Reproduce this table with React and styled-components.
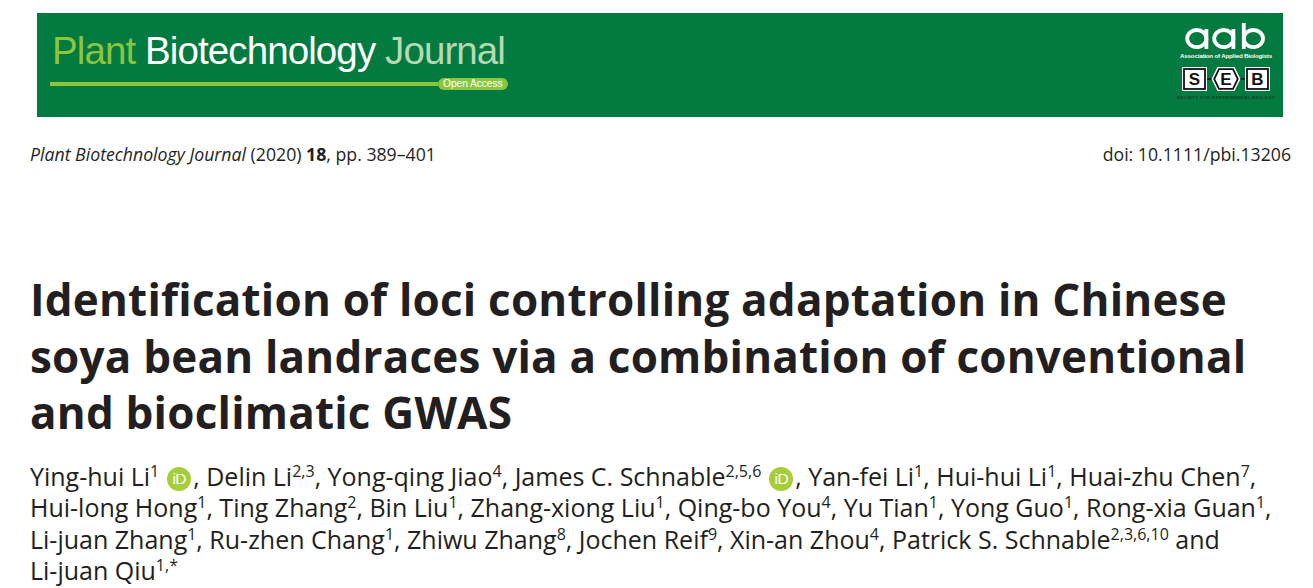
import React from "react";
import styled, { createGlobalStyle } from "styled-components";

const Global = createGlobalStyle`
  html, body { margin: 0; padding: 0; background: #fff; }
  body { width: 1313px; height: 588px; overflow: hidden; }
`;

const Page = styled.div`
  width: 1313px;
  padding-top: 13px;
  font-family: "Open Sans", "Noto Sans", sans-serif;
  color: #231f20;
`;

const Banner = styled.header`
  margin-left: 37px;
  width: 1246px;
  height: 104px;
  background: #037a40;
  display: flex;
  justify-content: space-between;
  box-sizing: border-box;
  padding: 0 12px 0 13px;
`;

const BrandBlock = styled.div`
  display: flex;
  flex-direction: column;
  padding-top: 16px;
`;

const JournalName = styled.div`
  font-family: "Liberation Sans", Arial, sans-serif;
  font-size: 38.5px;
  letter-spacing: -0.9px;
  line-height: 44px;
  padding-left: 2px;
  color: #fff;
`;

const Word = styled.span`
  color: ${(p) => p.$c};
`;

const RuleRow = styled.div`
  display: flex;
  align-items: center;
  margin-top: 5px;
`;

const Rule = styled.div`
  width: 388px;
  height: 4px;
  background: #8cc63f;
`;

const Pill = styled.span`
  background: #8cc63f;
  color: #fff;
  font-family: "Liberation Sans", Arial, sans-serif;
  font-size: 10.3px;
  line-height: 12px;
  height: 12px;
  padding: 0 5px;
  border-radius: 6px;
  letter-spacing: -0.1px;
`;

const Societies = styled.div`
  display: flex;
  flex-direction: column;
  align-items: center;
  padding-top: 10px;
  width: 90px;
`;

const Tiny = styled.div`
  color: ${(p) => p.$c || "#fff"};
  font-family: "Liberation Sans", Arial, sans-serif;
  font-weight: ${(p) => p.$w || 400};
  font-size: ${(p) => p.$s || 5}px;
  line-height: 7px;
  white-space: nowrap;
  letter-spacing: ${(p) => p.$ls || 0}px;
  margin: ${(p) => p.$m || "0"};
`;

const MetaRow = styled.div`
  display: flex;
  justify-content: space-between;
  padding: 26px 22px 0 30px;
  font-size: 17.7px;
  line-height: 22px;
`;

const Em = styled.em`
  font-style: italic;
`;

const Title = styled.h1`
  margin: 0;
  padding: 106px 0 0 30px;
  font-family: "Open Sans", sans-serif;
  font-weight: 700;
  font-size: 44px;
  line-height: 56.5px;
  letter-spacing: 0.2px;
  color: #231f20;
`;

const Authors = styled.div`
  padding: 20px 0 0 30px;
  font-size: 25px;
  line-height: 31.5px;
`;

const Line = styled.div`
  height: 31.5px;
  white-space: nowrap;
`;

const Sup = styled.sup`
  font-size: 16px;
  line-height: 0;
  vertical-align: 9px;
`;

const OrcidBadge = styled.span`
  display: inline-flex;
  align-items: center;
  justify-content: center;
  width: 24px;
  height: 24px;
  border-radius: 50%;
  background: #a6ce39;
  color: #fff;
  font-family: "Liberation Sans", Arial, sans-serif;
  font-size: 15.5px;
  line-height: 24px;
  letter-spacing: -0.5px;
  vertical-align: middle;
  margin: 0 2px 0 8px;
`;

const Orcid = () => <OrcidBadge>iD</OrcidBadge>;

const AabLogo = () => (
  <svg width="82" height="26" viewBox="0 0 82 26">
    <g fill="none" stroke="#fff" strokeWidth="3.8">
      <ellipse cx="11.8" cy="15.6" rx="9.6" ry="8.6" />
      <line x1="21.4" y1="6" x2="21.4" y2="26" />
      <ellipse cx="38.8" cy="15.6" rx="9.6" ry="8.6" />
      <line x1="48.4" y1="6" x2="48.4" y2="26" />
      <ellipse cx="68.4" cy="15.6" rx="9.6" ry="8.6" />
      <line x1="58.8" y1="0" x2="58.8" y2="26" />
    </g>
  </svg>
);

const SebLogo = () => (
  <svg width="90" height="26" viewBox="0 0 90 26">
    <line x1="25" y1="13" x2="65" y2="13" stroke="#111" strokeWidth="1.6" />
    <rect x="1" y="1" width="25" height="24" fill="#fff" />
    <rect x="3" y="3" width="21" height="20" fill="#fff" stroke="#111" strokeWidth="1.8" />
    <polygon points="30.5,13 36.5,1 53.5,1 59.5,13 53.5,25 36.5,25" fill="#fff" />
    <polygon points="33.2,13 38,3.2 52,3.2 56.8,13 52,22.8 38,22.8" fill="#fff" stroke="#111" strokeWidth="1.8" />
    <rect x="64" y="1" width="25" height="24" fill="#fff" />
    <rect x="66" y="3" width="21" height="20" fill="#fff" stroke="#111" strokeWidth="1.8" />
    <g fontFamily="Liberation Sans, Arial, sans-serif" fontWeight="700" fontSize="17" fill="#111" textAnchor="middle">
      <text x="13.5" y="19.3">S</text>
      <text x="45" y="19.3">E</text>
      <text x="76.5" y="19.3">B</text>
    </g>
  </svg>
);

export default function App() {
  return (
    <Page>
      <Global />
      <Banner>
        <BrandBlock>
          <JournalName>
            <Word $c="#8cc63f">Plant</Word> Biotechnology{" "}
            <Word $c="#b6d9b4">Journal</Word>
          </JournalName>
          <RuleRow>
            <Rule />
            <Pill>Open Access</Pill>
          </RuleRow>
        </BrandBlock>
        <Societies>
          <AabLogo />
          <Tiny $s={6.2} $w={700} $ls={-0.2} $m="3px 0 7px">
            Association of Applied Biologists
          </Tiny>
          <SebLogo />
          <Tiny $c="#173d22" $s={4.2} $w={700} $ls={0.5} $m="2px 0 0">
            SOCIETY FOR EXPERIMENTAL BIOLOGY
          </Tiny>
        </Societies>
      </Banner>

      <MetaRow>
        <span>
          <Em>Plant Biotechnology Journal</Em> (2020) <b>18</b>, pp. 389–401
        </span>
        <span>doi: 10.1111/pbi.13206</span>
      </MetaRow>

      <Title>
        Identification of loci controlling adaptation in Chinese
        <br />
        soya bean landraces via a combination of conventional
        <br />
        and bioclimatic GWAS
      </Title>

      <Authors>
        <Line>
          Ying-hui Li<Sup>1</Sup>
          <Orcid />, Delin Li<Sup>2,3</Sup>, Yong-qing Jiao<Sup>4</Sup>, James C. Schnable<Sup>2,5,6</Sup>
          <Orcid />, Yan-fei Li<Sup>1</Sup>, Hui-hui Li<Sup>1</Sup>, Huai-zhu Chen<Sup>7</Sup>,
        </Line>
        <Line>
          Hui-long Hong<Sup>1</Sup>, Ting Zhang<Sup>2</Sup>, Bin Liu<Sup>1</Sup>, Zhang-xiong Liu<Sup>1</Sup>, Qing-bo You<Sup>4</Sup>, Yu Tian<Sup>1</Sup>, Yong Guo<Sup>1</Sup>, Rong-xia Guan<Sup>1</Sup>,
        </Line>
        <Line>
          Li-juan Zhang<Sup>1</Sup>, Ru-zhen Chang<Sup>1</Sup>, Zhiwu Zhang<Sup>8</Sup>, Jochen Reif<Sup>9</Sup>, Xin-an Zhou<Sup>4</Sup>, Patrick S. Schnable<Sup>2,3,6,10</Sup> and
        </Line>
        <Line>
          Li-juan Qiu<Sup>1,*</Sup>
        </Line>
      </Authors>
    </Page>
  );
}
